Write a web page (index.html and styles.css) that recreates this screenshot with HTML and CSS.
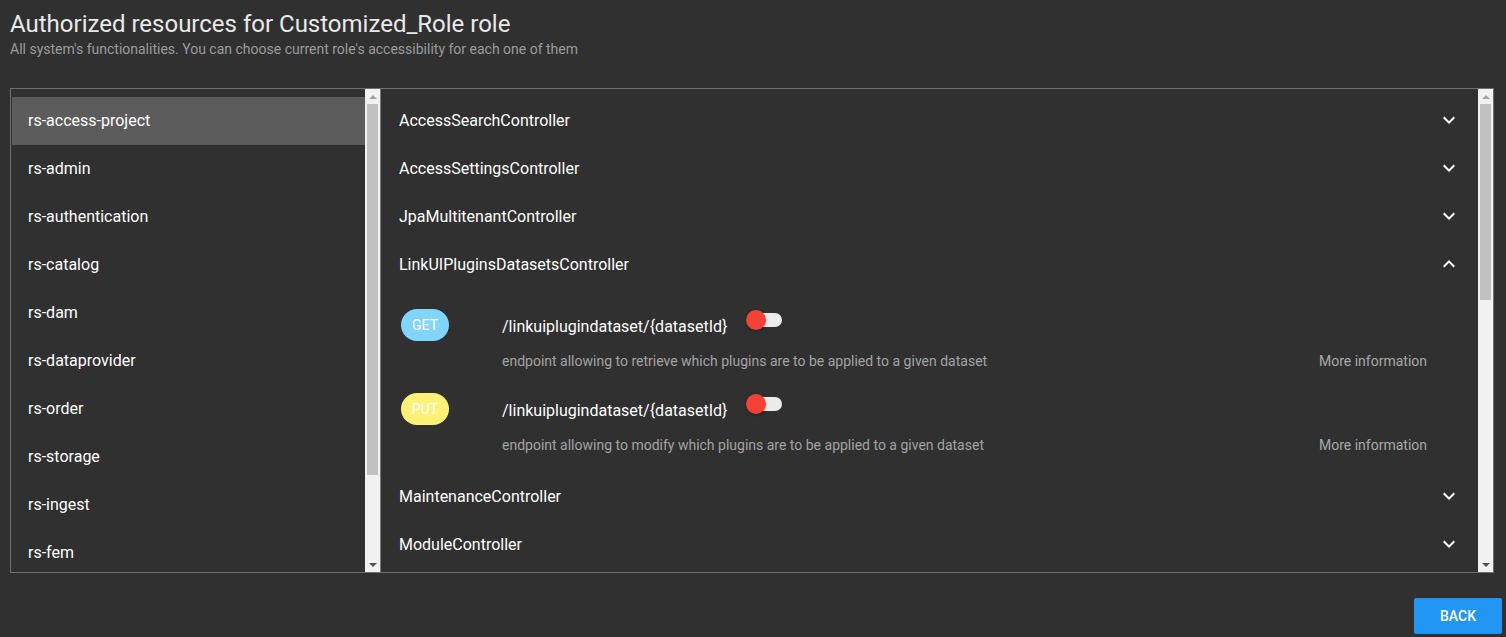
FILE: index.html
```html
<!DOCTYPE html>
<html lang="en">
<head>
<meta charset="utf-8">
<title>Authorized resources</title>
<link rel="stylesheet" href="styles.css">
</head>
<body>
<div class="page">
  <header class="head">
    <h1 class="title">Authorized resources for Customized_Role role</h1>
    <p class="subtitle">All system's functionalities. You can choose current role's accessibility for each one of them</p>
  </header>

  <div class="panels">
    <section class="panel panel-left">
      <ul class="list">
        <li class="item selected">rs-access-project</li>
        <li class="item">rs-admin</li>
        <li class="item">rs-authentication</li>
        <li class="item">rs-catalog</li>
        <li class="item">rs-dam</li>
        <li class="item">rs-dataprovider</li>
        <li class="item">rs-order</li>
        <li class="item">rs-storage</li>
        <li class="item">rs-ingest</li>
        <li class="item">rs-fem</li>
      </ul>
      <div class="scrollbar">
        <div class="sb-btn"><span class="arrow-up"></span></div>
        <div class="sb-track"><div class="sb-thumb thumb-left"></div></div>
        <div class="sb-btn"><span class="arrow-down"></span></div>
      </div>
    </section>

    <section class="panel panel-right">
      <div class="ctrls">
        <div class="ctrl"><span>AccessSearchController</span><svg class="chev" viewBox="0 0 24 24"><path d="M16.59 8.59L12 13.17 7.41 8.59 6 10l6 6 6-6z"/></svg></div>
        <div class="ctrl"><span>AccessSettingsController</span><svg class="chev" viewBox="0 0 24 24"><path d="M16.59 8.59L12 13.17 7.41 8.59 6 10l6 6 6-6z"/></svg></div>
        <div class="ctrl"><span>JpaMultitenantController</span><svg class="chev" viewBox="0 0 24 24"><path d="M16.59 8.59L12 13.17 7.41 8.59 6 10l6 6 6-6z"/></svg></div>
        <div class="ctrl"><span>LinkUIPluginsDatasetsController</span><svg class="chev" viewBox="0 0 24 24"><path d="M12 8l-6 6 1.41 1.41L12 10.83l4.59 4.58L18 14z"/></svg></div>
        <div class="details">
          <div class="endpoint">
            <span class="badge badge-get">GET</span>
            <div class="ep-body">
              <div class="ep-top">
                <span class="ep-path">/linkuiplugindataset/{datasetId}</span>
                <span class="toggle"><span class="toggle-track"></span><span class="toggle-thumb"></span></span>
              </div>
              <div class="ep-desc">
                <span>endpoint allowing to retrieve which plugins are to be applied to a given dataset</span>
                <span class="more">More information</span>
              </div>
            </div>
          </div>
          <div class="endpoint">
            <span class="badge badge-put">PUT</span>
            <div class="ep-body">
              <div class="ep-top">
                <span class="ep-path">/linkuiplugindataset/{datasetId}</span>
                <span class="toggle"><span class="toggle-track"></span><span class="toggle-thumb"></span></span>
              </div>
              <div class="ep-desc">
                <span>endpoint allowing to modify which plugins are to be applied to a given dataset</span>
                <span class="more">More information</span>
              </div>
            </div>
          </div>
        </div>
        <div class="ctrl"><span>MaintenanceController</span><svg class="chev" viewBox="0 0 24 24"><path d="M16.59 8.59L12 13.17 7.41 8.59 6 10l6 6 6-6z"/></svg></div>
        <div class="ctrl"><span>ModuleController</span><svg class="chev" viewBox="0 0 24 24"><path d="M16.59 8.59L12 13.17 7.41 8.59 6 10l6 6 6-6z"/></svg></div>
      </div>
      <div class="scrollbar">
        <div class="sb-btn"><span class="arrow-up"></span></div>
        <div class="sb-track"><div class="sb-thumb thumb-right"></div></div>
        <div class="sb-btn"><span class="arrow-down"></span></div>
      </div>
    </section>
  </div>

  <footer class="foot">
    <button class="back">BACK</button>
  </footer>
</div>
</body>
</html>
```

FILE: styles.css
```css
* { box-sizing: border-box; }

html, body {
  margin: 0;
  padding: 0;
  background: #303030;
  font-family: Roboto, "Liberation Sans", Arial, sans-serif;
  color: #ffffff;
  overflow: hidden;
}

.page {
  padding: 0 4px 0 10px;
}

.head {
  padding-top: 10px;
}

.title {
  margin: 0;
  font-size: 24px;
  font-weight: 400;
  line-height: 28px;
  color: #e9e9e9;
}

.subtitle {
  margin: 3px 0 0;
  font-size: 14px;
  line-height: 16px;
  color: #9b9b9b;
}

.panels {
  margin-top: 31px;
  width: 1484px;
  height: 485px;
  display: flex;
  border: 1px solid #6f6f6f;
}

.panel {
  display: flex;
  height: 100%;
  overflow: hidden;
}

.panel-left {
  width: 370px;
  border-right: 1px solid #7a7a7a;
}

.panel-right {
  flex: 1;
}

.list {
  list-style: none;
  margin: 0;
  padding: 8px 0 0 1px;
  flex: 1;
  overflow: hidden;
}

.item {
  height: 48px;
  line-height: 48px;
  padding-left: 16px;
  font-size: 16px;
  color: #ffffff;
  white-space: nowrap;
}

.item.selected {
  background: #5c5c5c;
}

/* fake classic scrollbar */
.scrollbar {
  width: 15px;
  flex: none;
  display: flex;
  flex-direction: column;
  background: #f1f1f1;
}

.sb-btn {
  height: 15px;
  flex: none;
  display: flex;
  align-items: center;
  justify-content: center;
}

.arrow-up {
  width: 0;
  height: 0;
  border-left: 4px solid transparent;
  border-right: 4px solid transparent;
  border-bottom: 4px solid #a3a3a3;
}

.arrow-down {
  width: 0;
  height: 0;
  border-left: 4px solid transparent;
  border-right: 4px solid transparent;
  border-top: 4px solid #505050;
}

.sb-track {
  flex: 1;
  padding: 0 2px;
}

.sb-thumb {
  background: #c1c1c1;
  width: 100%;
}

.thumb-left { height: 371px; }
.thumb-right { height: 196px; }

/* right side */
.ctrls {
  flex: 1;
  padding-top: 7px;
  overflow: hidden;
}

.ctrl {
  height: 48px;
  display: flex;
  align-items: center;
  justify-content: space-between;
  padding: 0 17px 0 18px;
  font-size: 16px;
  color: #ffffff;
}

.chev {
  width: 24px;
  height: 24px;
  fill: #ffffff;
}

.details {
  padding: 21px 0 15px;
  display: flex;
  flex-direction: column;
  gap: 20px;
}

.endpoint {
  height: 64px;
  display: flex;
  padding-left: 20px;
}

.badge {
  flex: none;
  width: 48px;
  height: 32px;
  border-radius: 16px;
  display: flex;
  align-items: center;
  justify-content: center;
  font-size: 14px;
  color: #ffffff;
  margin-right: 53px;
}

.badge-get { background: #81d4fa; }
.badge-put { background: #fff176; }

.ep-body {
  flex: 1;
  padding-right: 51px;
}

.ep-top {
  height: 34px;
  display: flex;
  align-items: flex-start;
}

.ep-path {
  margin-top: 8px;
  font-size: 16px;
  line-height: 19px;
  color: #ffffff;
}

.toggle {
  position: relative;
  margin: 1px 0 0 18px;
  width: 36px;
  height: 20px;
}

.toggle-track {
  position: absolute;
  left: 2px;
  top: 3px;
  width: 34px;
  height: 14px;
  border-radius: 7px;
  background: #ececec;
}

.toggle-thumb {
  position: absolute;
  left: 0;
  top: 0;
  width: 20px;
  height: 20px;
  border-radius: 50%;
  background: #f44336;
  box-shadow: 0 1px 3px rgba(0, 0, 0, 0.3);
}

.ep-desc {
  margin-top: 8px;
  display: flex;
  justify-content: space-between;
  font-size: 14px;
  line-height: 20px;
  color: #a3a3a3;
}

.more {
  color: #a8a8a8;
}

.foot {
  display: flex;
  justify-content: flex-end;
  margin-top: 25px;
}

.back {
  width: 88px;
  height: 36px;
  border: none;
  border-radius: 2px;
  background: #2196f3;
  color: #ffffff;
  font-family: Roboto, "Liberation Sans", Arial, sans-serif;
  font-size: 14px;
  font-weight: 500;
  padding: 0;
}
```
